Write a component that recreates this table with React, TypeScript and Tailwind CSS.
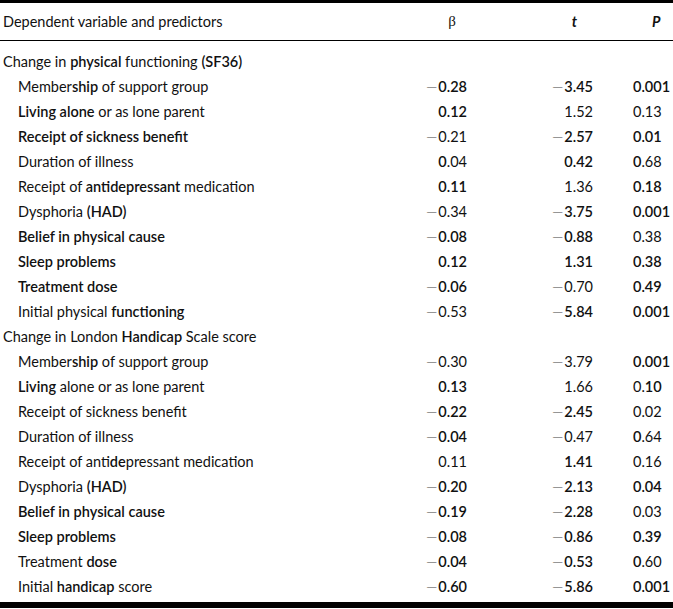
type Part = string | { b: string };
type Row = { label: Part[]; beta: Part[]; t: Part[]; p: Part[]; group?: boolean };

const M = "\u2014";

const rows: Row[] = [
  { group: true, label: ["Change in ", { b: "physical" }, " functioning ", { b: "(SF36)" }], beta: [], t: [], p: [] },
  { label: ["Member", { b: "ship" }, " of support group"], beta: [M, { b: "0.28" }], t: [M, { b: "3.45" }], p: [{ b: "0.001" }] },
  { label: [{ b: "Living alone" }, " or as lone parent"], beta: [{ b: "0.12" }], t: ["1.52"], p: ["0.13"] },
  { label: [{ b: "Receipt of sickness benefit" }], beta: [M, "0.21"], t: [M, { b: "2.57" }], p: [{ b: "0.01" }] },
  { label: ["Duration of illness"], beta: [{ b: "0" }, ".04"], t: [{ b: "0.42" }], p: [{ b: "0" }, ".68"] },
  { label: ["Receipt of ", { b: "antidepressant" }, " medication"], beta: [{ b: "0.11" }], t: ["1.36"], p: [{ b: "0.18" }] },
  { label: ["Dysphoria ", { b: "(HAD)" }], beta: [M, "0.34"], t: [M, { b: "3.75" }], p: [{ b: "0.001" }] },
  { label: [{ b: "Belief in physical cause" }], beta: [M, { b: "0.08" }], t: [M, { b: "0.88" }], p: ["0.38"] },
  { label: [{ b: "Sleep problems" }], beta: [{ b: "0.12" }], t: [{ b: "1.31" }], p: [{ b: "0.38" }] },
  { label: [{ b: "Treatment dose" }], beta: [M, { b: "0.06" }], t: [M, "0.70"], p: [{ b: "0.49" }] },
  { label: ["Initial physical ", { b: "functioning" }], beta: [M, "0.53"], t: [M, { b: "5.84" }], p: [{ b: "0.001" }] },
  { group: true, label: ["Change in London ", { b: "Handicap" }, " Scale score"], beta: [], t: [], p: [] },
  { label: ["Member", { b: "ship" }, " of support group"], beta: [M, "0.30"], t: [M, "3.79"], p: [{ b: "0.001" }] },
  { label: [{ b: "Living" }, " alone or as lone parent"], beta: [{ b: "0.13" }], t: ["1.66"], p: ["0.", { b: "10" }] },
  { label: ["Receipt of sickness benefit"], beta: [M, { b: "0.22" }], t: [M, { b: "2.45" }], p: ["0.02"] },
  { label: ["Duration of illness"], beta: [M, { b: "0.04" }], t: [M, "0.47"], p: [{ b: "0" }, ".64"] },
  { label: ["Receipt of anti", { b: "de" }, "pressant medication"], beta: ["0.11"], t: [{ b: "1.41" }], p: ["0.16"] },
  { label: ["Dysphoria ", { b: "(HAD)" }], beta: [M, { b: "0.20" }], t: [M, { b: "2.13" }], p: [{ b: "0.04" }] },
  { label: [{ b: "Belief in physical cause" }], beta: [M, { b: "0.19" }], t: [M, { b: "2.28" }], p: ["0.03"] },
  { label: [{ b: "Sleep problems" }], beta: [M, { b: "0.08" }], t: [M, { b: "0.86" }], p: [{ b: "0.39" }] },
  { label: ["Treatment ", { b: "dose" }], beta: [M, { b: "0.04" }], t: [M, { b: "0.53" }], p: [{ b: "0" }, ".60"] },
  { label: ["Initial ", { b: "handicap" }, " score"], beta: [M, { b: "0.60" }], t: [M, { b: "5.86" }], p: [{ b: "0.001" }] },
];

function Text({ parts }: { parts: Part[] }) {
  return (
    <>
      {parts.map((x, i) =>
        typeof x === "string" ? (
          x === M ? (
            <span key={i} className="font-light text-[#444] mr-[1px]">{x}</span>
          ) : (
            <span key={i}>{x}</span>
          )
        ) : (
          <span key={i} className="font-semibold">{x.b}</span>
        )
      )}
    </>
  );
}

export default function App() {
  return (
    <div
      className="w-[673px] h-[609px] bg-white text-[#111] text-[14.5px] leading-[25px]"
      style={{ fontFamily: "Lato, 'Open Sans', sans-serif" }}
    >
      <div className="border-t-[3px] border-black" />
      <div className="flex h-[38px] items-center border-b border-black">
        <div className="flex-1 pl-[3px]">Dependent variable and predictors</div>
        <div className="w-[80px] text-right pr-[11px] text-[15px]" style={{ fontFamily: "'Liberation Serif', serif" }}>β</div>
        <div className="w-[126px] text-right pr-[16px] font-bold italic">t</div>
        <div className="w-[40px]" />
        <div className="w-[40px] pl-[19px] font-bold italic">P</div>
      </div>
      <div className="pt-[8px] pb-[3px]">
        {rows.map((r, i) => (
          <div key={i} className="flex h-[25px] items-center">
            <div className={r.group ? "flex-1 pl-[3px]" : "flex-1 pl-[18px]"}>
              <Text parts={r.label} />
            </div>
            <div className="w-[80px] text-right">
              <Text parts={r.beta} />
            </div>
            <div className="w-[126px] text-right">
              <Text parts={r.t} />
            </div>
            <div className="w-[40px]" />
            <div className="w-[40px] whitespace-nowrap">
              <Text parts={r.p} />
            </div>
          </div>
        ))}
      </div>
      <div className="border-t-[6px] border-black" />
    </div>
  );
}
